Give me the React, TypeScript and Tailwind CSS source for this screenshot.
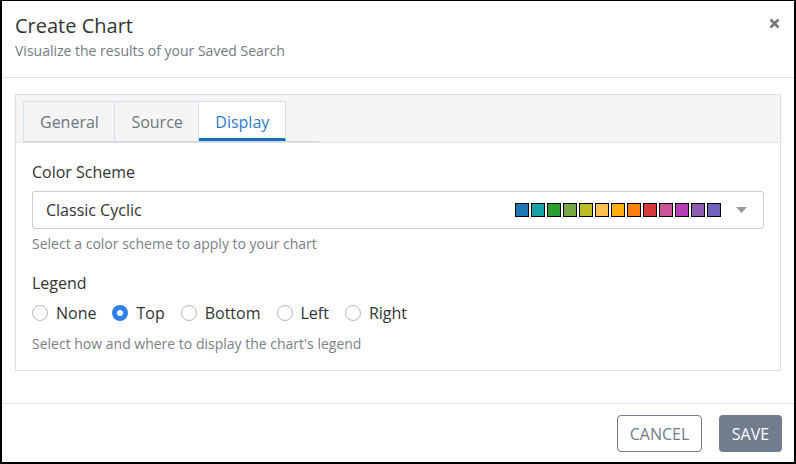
import React from "react";

const swatches = [
  "#1f77b4", "#17a2a8", "#2ca02c", "#78a843", "#bcbd22", "#ffc04f", "#ffac10",
  "#ff7f0e", "#d63a3a", "#cc5398", "#b73fb6", "#8c5db0", "#6e63bd",
];

function Radio({ label, checked }: { label: string; checked?: boolean }) {
  return (
    <label className="flex items-center gap-2">
      {checked ? (
        <span className="flex h-4 w-4 items-center justify-center rounded-full bg-[#2f80ed]">
          <span className="h-[6px] w-[6px] rounded-full bg-white" />
        </span>
      ) : (
        <span className="h-4 w-4 rounded-full border border-[#b8b8b8] bg-white" />
      )}
      <span className="text-[16px] leading-5 text-[#333]">{label}</span>
    </label>
  );
}

export default function App() {
  return (
    <div
      className="flex h-[464px] w-[796px] flex-col border-t border-r-2 border-b-2 border-l-2 border-black bg-white"
      style={{ fontFamily: '"Open Sans", "Noto Sans", sans-serif' }}
    >
      {/* Header */}
      <div className="relative border-b border-[#e2e2e2] px-[13px] pt-[11px] pb-[16px]">
        <div className="text-[20px] leading-7 text-[#333]">Create Chart</div>
        <div className="mt-px text-[14px] leading-5 text-[#737b83]">Visualize the results of your Saved Search</div>
        <svg className="absolute right-[14px] top-[17px]" width="11" height="11" viewBox="0 0 11 11">
          <path d="M1.5 1.5 L9.5 9.5 M9.5 1.5 L1.5 9.5" stroke="#777" strokeWidth="2.6" strokeLinecap="butt" />
        </svg>
      </div>

      {/* Body */}
      <div className="flex-1 px-[13px] pt-4">
        <div className="border border-[#dedede]">
          <div className="flex border-b border-[#e3e3e3] bg-[#f5f5f5] pl-[7px] pt-[6px]">
            <div className="flex border-b border-[#cfd8e3] pr-[33px]">
              <div className="flex h-10 items-center border border-b-0 border-[#d2e1f0] pl-4 pr-[15.5px] text-[16px] text-[#6b7683]">General</div>
              <div className="flex h-10 items-center border border-b-0 border-l-0 border-[#d2e1f0] pl-4 pr-[15.5px] text-[16px] text-[#6b7683]">Source</div>
              <div className="flex h-10 items-center border border-b-[3px] border-l-0 border-[#d2e1f0] border-b-[#1a6ec4] bg-white pl-4 pr-[15.5px] pt-[3px] text-[16px] text-[#2f7dd0]">Display</div>
            </div>
          </div>
          <div className="px-4 pt-[18px] pb-4">
            <div className="text-[16px] leading-[22px] text-[#333]">Color Scheme</div>
            <div className="mt-[8px] flex h-[38px] items-center rounded-[3px] border border-[#c9cdd1] pl-[13px] pr-4">
              <span className="flex-1 text-[16px] text-[#333]">Classic Cyclic</span>
              <div className="flex gap-[2px]">
                {swatches.map((c) => (
                  <span key={c} className="h-[14px] w-[14px] border border-black" style={{ backgroundColor: c }} />
                ))}
              </div>
              <svg className="ml-[15px]" width="11" height="6" viewBox="0 0 11 6">
                <path d="M0 0 L11 0 L5.5 6 Z" fill="#9a9a9a" />
              </svg>
            </div>
            <div className="mt-[5px] text-[14px] leading-5 text-[#7a7f85]">Select a color scheme to apply to your chart</div>
            <div className="mt-[18px] text-[16px] leading-[22px] text-[#333]">Legend</div>
            <div className="mt-[9px] flex items-center gap-4">
              <Radio label="None" />
              <Radio label="Top" checked />
              <Radio label="Bottom" />
              <Radio label="Left" />
              <Radio label="Right" />
            </div>
            <div className="mt-[11px] text-[14px] leading-5 text-[#7a7f85]">Select how and where to display the chart's legend</div>
          </div>
        </div>
      </div>

      {/* Footer */}
      <div className="flex h-[59px] items-start justify-end gap-[17px] border-t border-[#e2e2e2] px-[12px] pt-[11px]">
        <button className="h-[37px] w-[85px] rounded-[4px] border border-[#6f7c8e] bg-white text-[16px] text-[#6f7c8e]">CANCEL</button>
        <button className="h-[37px] w-[63px] rounded-[4px] bg-[#707d8f] text-[16px] text-white">SAVE</button>
      </div>
    </div>
  );
}
